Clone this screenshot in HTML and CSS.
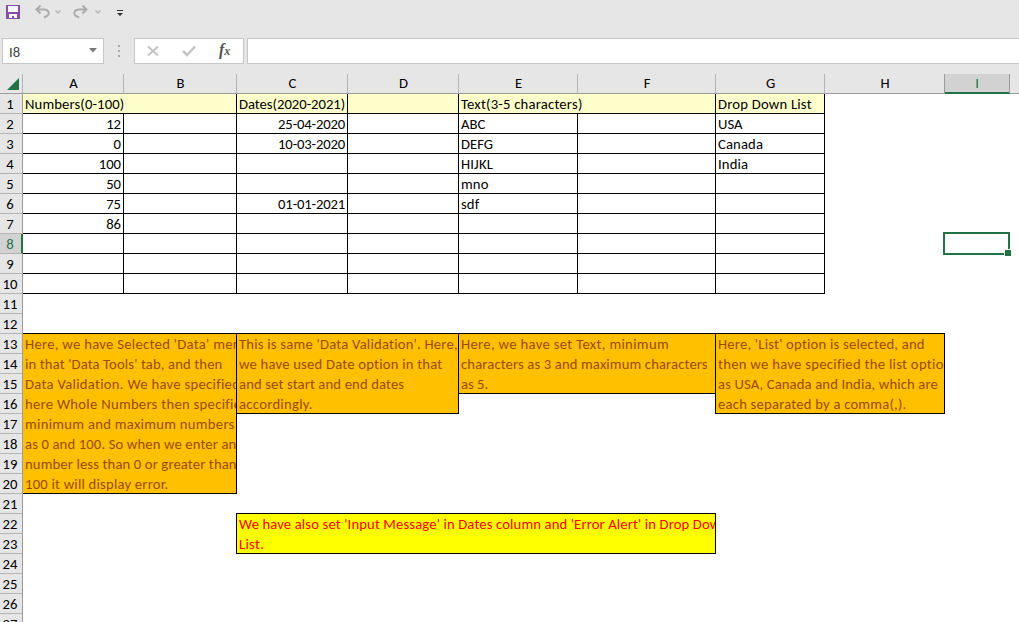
FILE: index.html
```
<!DOCTYPE html>
<html lang="en">
<head>
<meta charset="utf-8">
<title>Data Validation</title>
<link rel="stylesheet" href="styles.css">
</head>
<body>
<header class="quick">
  <svg class="save" width="14" height="14" viewBox="0 0 14 14"><path fill="#8650a8" d="M0 0h14v14H0z"/><path fill="#fff" d="M2 1h10v6H2zM3 9h8v4H8v-2H6v2H3z"/><path fill="#8650a8" d="M6 11h2v2H6z"/></svg>
  <svg class="undo" width="15" height="14" viewBox="0 0 15 14" fill="none" stroke="#acacac" stroke-width="2"><path d="M5.500 .5L1.500 4.500l4 4M2 4.500h7c5 0 6 4.500 3 6.500l-3 1.500"/></svg>
  <svg class="caret" width="6" height="4" viewBox="0 0 6 4" fill="none" stroke="#b8b8b8" stroke-width="1.500"><path d="M.5 .5L3 3 5.500 .5"/></svg>
  <svg class="redo" width="15" height="14" viewBox="0 0 15 14" fill="none" stroke="#acacac" stroke-width="2"><path d="M9.500 .5l4 4-4 4M13 4.500H6c-5 0-6 4.500-3 6.500l3 1.500"/></svg>
  <svg class="caret" width="6" height="4" viewBox="0 0 6 4" fill="none" stroke="#b8b8b8" stroke-width="1.500"><path d="M.5 .5L3 3 5.500 .5"/></svg>
  <svg class="more" width="6" height="7" viewBox="0 0 6 7"><path fill="#333" d="M0 0h6v1H0zM0 3h6L3 6z"/></svg>
</header>
<div class="formula">
  <div class="namebox"><span>I8</span><svg width="8" height="5" viewBox="0 0 8 5"><path fill="#777" d="M0 0h8L4 4.500z"/></svg></div>
  <div class="grip"><i></i><i></i><i></i></div>
  <div class="actions">
    <svg width="12" height="12" viewBox="0 0 12 12" fill="none" stroke="#c4c4c4" stroke-width="2"><path d="M1 1.500l10 9M11 1.500l-10 9"/></svg>
    <svg width="14" height="12" viewBox="0 0 14 12" fill="none" stroke="#c4c4c4" stroke-width="2.500"><path d="M1 6l4 4 8-8.500"/></svg>
    <span class="fx">f<small>x</small></span>
  </div>
  <div class="input"></div>
</div>
<main class="sheet">
  <div class="rows">
    <div class="row heads"><b class="corner"><svg width="12" height="12" viewBox="0 0 12 12"><path fill="#217346" d="M12 0v12H0z"/></svg></b><b>A</b><b>B</b><b>C</b><b>D</b><b>E</b><b>F</b><b>G</b><b>H</b><b class="on">I</b><b></b></div>
    <div class="row table title"><b>1</b><p class="two t1">Numbers(0-100)</p><p class="t0">Dates(2020-2021)</p><p></p><p class="two t2">Text(3-5 characters)</p><p class="t2">Drop Down List</p></div>
    <div class="row table"><b>2</b><p class="num">12</p><p></p><p class="num date">25-04-2020</p><p></p><p>ABC</p><p></p><p>USA</p></div>
    <div class="row table"><b>3</b><p class="num">0</p><p></p><p class="num date">10-03-2020</p><p></p><p>DEFG</p><p></p><p class="t1">Canada</p></div>
    <div class="row table"><b>4</b><p class="num">100</p><p></p><p></p><p></p><p class="t1">HIJKL</p><p></p><p class="t1">India</p></div>
    <div class="row table"><b>5</b><p class="num">50</p><p></p><p></p><p></p><p class="t1">mno</p><p></p><p></p></div>
    <div class="row table"><b>6</b><p class="num">75</p><p></p><p class="num date">01-01-2021</p><p></p><p class="t1">sdf</p><p></p><p></p></div>
    <div class="row table"><b>7</b><p class="num">86</p><p></p><p></p><p></p><p></p><p></p><p></p></div>
    <div class="row table"><b class="on">8</b><p></p><p></p><p></p><p></p><p></p><p></p><p></p><span class="selected"></span></div>
    <div class="row table"><b>9</b><p></p><p></p><p></p><p></p><p></p><p></p><p></p></div>
    <div class="row table"><b>10</b><p></p><p></p><p></p><p></p><p></p><p></p><p></p></div>
    <div class="row"><b>11</b></div>
    <div class="row"><b>12</b></div>
    <div class="row"><b>13</b></div>
    <div class="row"><b>14</b></div>
    <div class="row"><b>15</b></div>
    <div class="row"><b>16</b></div>
    <div class="row"><b>17</b></div>
    <div class="row"><b>18</b></div>
    <div class="row"><b>19</b></div>
    <div class="row"><b>20</b></div>
    <div class="row"><b>21</b></div>
    <div class="row"><b>22</b></div>
    <div class="row"><b>23</b></div>
    <div class="row"><b>24</b></div>
    <div class="row"><b>25</b></div>
    <div class="row"><b>26</b></div>
    <div class="row"><b>27</b></div>
  </div>
  <div class="notes">
    <div class="note numbers">
      <p class="t3">Here, we have Selected 'Data' menu</p>
      <p class="t1">in that 'Data Tools' tab, and then</p>
      <p class="t3">Data Validation. We have specified</p>
      <p class="t3">here Whole Numbers then specified</p>
      <p class="t3">minimum and maximum numbers</p>
      <p class="t1">as 0 and 100. So when we enter any</p>
      <p class="t1">number less than 0 or greater than</p>
      <p class="t2">100 it will display error.</p>
    </div>
    <div class="note dates">
      <p class="t2">This is same 'Data Validation'. Here,</p>
      <p class="t2">we have used Date option in that</p>
      <p class="t1">and set start and end dates</p>
      <p class="t3">accordingly.</p>
    </div>
    <div class="note text">
      <p class="t4">Here, we have set Text, minimum</p>
      <p class="t1">characters as 3 and maximum characters</p>
      <p class="t0">as 5.</p>
    </div>
    <div class="note list">
      <p class="t2">Here, 'List' option is selected, and</p>
      <p class="t3">then we have specified the list options</p>
      <p class="t1">as USA, Canada and India, which are</p>
      <p class="t2">each separated by a comma(,).</p>
    </div>
    <div class="note alert">
      <p class="t1">We have also set 'Input Message' in Dates column and 'Error Alert' in Drop Down</p>
      <p class="t3">List.</p>
    </div>
  </div>
</main>
</body>
</html>
```
FILE: styles.css
```
* { box-sizing: border-box; }
body { margin: 0; width: 1019px; height: 622px; overflow: hidden; background: #e6e6e6; color: #000; font: 14.667px/20px Carlito, Calibri, Lato, sans-serif; }
p { margin: 0; }
svg { display: block; flex: none; }

.quick { display: flex; align-items: flex-start; height: 38px; padding: 5px 0 0 6px; }
.undo { margin-left: 15px; }
.caret { margin: 5px 0 0 5px; }
.redo { margin-left: 12px; }
.redo + .caret { margin-left: 7px; }
.more { margin: 5px 0 0 16px; }

.formula { display: flex; height: 26px; margin: 0 0 10px 2px; }
.namebox, .actions, .input { background: #fff; border: 1px solid #c6c6c6; }
.namebox { display: flex; align-items: center; justify-content: space-between; width: 102px; padding: 1px 6px 0 6px; color: #444; }
.namebox svg { margin-bottom: 3px; }
.grip { display: flex; flex-direction: column; align-items: center; justify-content: center; gap: 3px; width: 30px; }
.grip i { width: 2px; height: 2px; background: #aaa; }
.actions { display: flex; align-items: center; width: 110px; padding-left: 12px; gap: 24px; }
.actions svg + svg { margin-left: -1px; }
.fx { color: #555; font: italic bold 16px/20px "Liberation Serif", serif; margin: -2px 0 0 -1px; }
.fx small { font-size: 12px; }
.input { flex: 1; margin-left: 3px; border-right: 0; }

.sheet { display: grid; height: 548px; overflow: hidden; background: linear-gradient(#e6e6e6 20px, #fff 20px); }
.rows, .notes { grid-area: 1 / 1; }
.row, .notes { display: grid; grid-template-columns: 23px 101px 113px 111px 111px 119px 138px 109px 120px 65px 9px; grid-auto-rows: 20px; }
.row b { height: 20px; font-weight: 400; text-align: center; padding-right: 2px; background: #e6e6e6; border-right: 1px solid #9b9b9b; border-bottom: 1px solid #b4b4b4; line-height: 21px; }
.row b.on { background: #d2d2d2; color: #217346; border-right: 2px solid #217346; padding: 0 1px 0 0; }
.row.heads b { border-bottom-color: #9b9b9b; border-right-color: #b4b4b4; line-height: 19px; padding: 0 0 0 1px; }
.row.heads b:last-child { border-right: 0; }
.row.heads b.on { border-right: 1px solid #9b9b9b; border-bottom: 2px solid #217346; box-shadow: -1px 0 #9b9b9b; padding: 0; }
.row.heads .corner { display: flex; justify-content: flex-end; align-items: center; padding: 0 3px 0 0; }
.table p { height: 20px; padding: 0 2px; border-right: 1px solid #000; border-bottom: 1px solid #000; white-space: nowrap; line-height: 21px; }
.title p { background: #ffc; }
.two { grid-column: span 2; }
.num { text-align: right; }
.date { letter-spacing: -.15px; }
.selected { grid-column: 10; position: relative; z-index: 1; width: 67px; height: 23px; margin: -2px 0 0 -2px; border: 2px solid #217346; }
.selected::after { content: ""; position: absolute; right: -3px; bottom: -3px; width: 6px; height: 6px; background: #217346; border: solid #fff; border-width: 1px 0 0 1px; }

.notes { grid-template-rows: repeat(28, 20px); }
.note { margin: -1px 0 0 -1px; padding-left: 2px; border: 1px solid #000; background: #ffc000; color: #9c4a00; overflow: hidden; white-space: nowrap; }
.note p { line-height: 20px; }
.numbers { grid-area: 14 / 2 / span 8 / span 2; margin-left: 0; border-left: 0; }
.dates { grid-area: 14 / 4 / span 4 / span 2; }
.text { grid-area: 14 / 6 / span 3 / span 2; }
.list { grid-area: 14 / 8 / span 4 / span 2; }
.alert { grid-area: 23 / 4 / span 2 / span 4; background: #ff0; color: #f00; }

.t0 { letter-spacing: -.02px; }
.t1 { letter-spacing: .13px; }
.t2 { letter-spacing: .21px; }
.t3 { letter-spacing: .29px; }
.t4 { letter-spacing: .33px; }
```
